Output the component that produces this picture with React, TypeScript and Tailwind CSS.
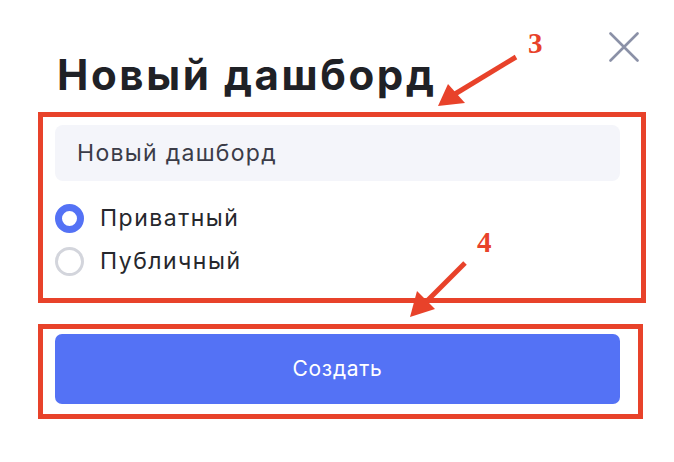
import React from "react";

function CloseIcon() {
  return (
    <svg width="30" height="30" viewBox="0 0 30 30" fill="none" xmlns="http://www.w3.org/2000/svg">
      <path d="M1.5 1.5L28.5 28.5M28.5 1.5L1.5 28.5" stroke="#8b91a7" strokeWidth="2.6" strokeLinecap="round" />
    </svg>
  );
}

function Radio({ checked, label }: { checked: boolean; label: string }) {
  return (
    <label className="flex items-center gap-[16px] h-[29px] cursor-pointer">
      {checked ? (
        <span className="block w-[29px] h-[29px] rounded-full border-[7px] border-[#5472f5] bg-white" />
      ) : (
        <span className="block w-[29px] h-[29px] rounded-full border-[3px] border-[#d3d5dc] bg-white" />
      )}
      <span className="text-[23px] leading-none tracking-[1.5px] text-[#26272c]">{label}</span>
    </label>
  );
}

// red callouts drawn on top of the screenshot
function Annotations() {
  return (
    <svg className="absolute inset-0 pointer-events-none" width="674" height="462" viewBox="0 0 674 462" fill="none">
      <line x1="516" y1="57" x2="450" y2="97" stroke="#e8422a" strokeWidth="5" />
      <polygon points="438,106 448,84 465,103" fill="#e8422a" />
      <line x1="465" y1="263" x2="422" y2="306" stroke="#e8422a" strokeWidth="5" />
      <polygon points="410,317 417,291 435,309" fill="#e8422a" />
      <text x="528" y="53" fill="#e8422a" fontFamily="'Liberation Serif', serif" fontWeight="700" fontSize="29">3</text>
      <text x="477" y="252" fill="#e8422a" fontFamily="'Liberation Serif', serif" fontWeight="700" fontSize="29">4</text>
    </svg>
  );
}

export default function App() {
  return (
    <div className="relative w-[674px] h-[462px] overflow-hidden bg-white font-['Inter',sans-serif]">
      <div className="pl-[38px] pt-[32px]">
        <div className="flex items-start justify-between pr-[35px]">
          <h1 className="mt-[19px] pl-[19px] text-[42px] leading-[48px] tracking-[2.6px] font-bold text-[#1f2126]">Новый дашборд</h1>
          <button className="w-[30px] h-[30px]" aria-label="Закрыть">
            <CloseIcon />
          </button>
        </div>

        <div className="mt-[13px] w-[608px] h-[191px] border-[5px] border-[#e8422a] pl-[12px] pt-[8px]">
          <div className="w-[565px] h-[56px] rounded-[8px] bg-[#f4f5fa] flex items-center px-[22px] text-[23px] tracking-[1.3px] text-[#3b3c48]">
            Новый дашборд
          </div>
          <div className="mt-[23px] flex flex-col gap-[14px]">
            <Radio checked label="Приватный" />
            <Radio checked={false} label="Публичный" />
          </div>
        </div>

        <div className="mt-[21px] w-[605px] h-[95px] border-[5px] border-[#e8422a] pl-[12px] pt-[5px]">
          <button className="w-[565px] h-[70px] rounded-[7px] bg-[#5472f5] text-white text-[21px] tracking-[0.7px] flex items-center justify-center">
            Создать
          </button>
        </div>
      </div>
      <Annotations />
    </div>
  );
}
